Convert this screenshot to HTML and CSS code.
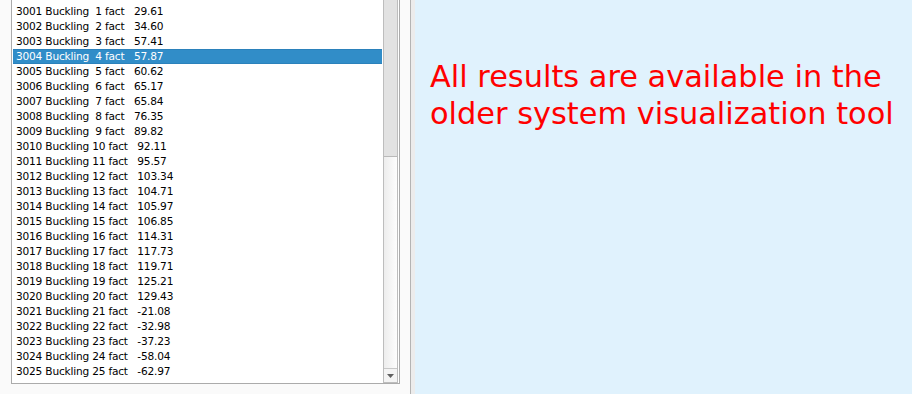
FILE: index.html
```html
<!DOCTYPE html>
<html>
  <head>
    <title>Buckling Results</title>
    <link rel="stylesheet" href="styles.css">
  </head>
  <body>
    <div class="left-panel">
      <div class="listbox">
        <div class="list-rows">
          <div class="row"> </div>
          <div class="row">3001 Buckling  1 fact   29.61</div>
          <div class="row">3002 Buckling  2 fact   34.60</div>
          <div class="row">3003 Buckling  3 fact   57.41</div>
          <div class="row selected">3004 Buckling  4 fact   57.87</div>
          <div class="row">3005 Buckling  5 fact   60.62</div>
          <div class="row">3006 Buckling  6 fact   65.17</div>
          <div class="row">3007 Buckling  7 fact   65.84</div>
          <div class="row">3008 Buckling  8 fact   76.35</div>
          <div class="row">3009 Buckling  9 fact   89.82</div>
          <div class="row">3010 Buckling 10 fact   92.11</div>
          <div class="row">3011 Buckling 11 fact   95.57</div>
          <div class="row">3012 Buckling 12 fact   103.34</div>
          <div class="row">3013 Buckling 13 fact   104.71</div>
          <div class="row">3014 Buckling 14 fact   105.97</div>
          <div class="row">3015 Buckling 15 fact   106.85</div>
          <div class="row">3016 Buckling 16 fact   114.31</div>
          <div class="row">3017 Buckling 17 fact   117.73</div>
          <div class="row">3018 Buckling 18 fact   119.71</div>
          <div class="row">3019 Buckling 19 fact   125.21</div>
          <div class="row">3020 Buckling 20 fact   129.43</div>
          <div class="row">3021 Buckling 21 fact   -21.08</div>
          <div class="row">3022 Buckling 22 fact   -32.98</div>
          <div class="row">3023 Buckling 23 fact   -37.23</div>
          <div class="row">3024 Buckling 24 fact   -58.04</div>
          <div class="row">3025 Buckling 25 fact   -62.97</div>
        </div>
        <div class="scrollbar">
          <div class="scroll-thumb"></div>
          <div class="scroll-track"></div>
          <div class="scroll-down">
            <svg width="7" height="4" viewBox="0 0 7 4">
              <polygon points="0,0 7,0 3.5,4" fill="#606060" />
            </svg>
          </div>
        </div>
      </div>
    </div>
    <div class="splitter"></div>
    <div class="right-panel">
      <p class="notice">All results are available in the older system visualization tool</p>
    </div>
  </body>
</html>
```
FILE: styles.css
```css
html,
body {
  margin: 0;
  padding: 0;
}
body {
  display: flex;
  width: 912px;
  height: 394px;
  overflow: hidden;
  font-family: "DejaVu Sans", Verdana, sans-serif;
}
.left-panel {
  width: 410px;
  flex-shrink: 0;
  background: #fafafa;
  border-right: 1px solid #b4b4b4;
  overflow: hidden;
}
.listbox {
  display: flex;
  box-sizing: border-box;
  width: 389px;
  height: 397px;
  margin: -13px 0 0 11px;
  padding: 1px 1px 0 1px;
  background: #fff;
  border: 1px solid #ababab;
}
.list-rows {
  flex: 1;
  overflow: hidden;
}
.row {
  height: 15px;
  line-height: 15px;
  padding-left: 3px;
  margin-right: 1px;
  font-size: 10.6px;
  letter-spacing: -0.2px;
  color: #000;
  white-space: pre;
}
.row.selected {
  background: #318dc8;
  color: #fff;
  box-shadow: inset 0 1px 0 #2b81bb, inset 0 -1px 0 #2b81bb;
}
.scrollbar {
  display: flex;
  flex-direction: column;
  box-sizing: border-box;
  width: 15px;
  flex-shrink: 0;
  border-left: 1px solid #bdbdbd;
  border-right: 1px solid #bdbdbd;
  border-bottom: 1px solid #bdbdbd;
}
.scroll-thumb {
  height: 167px;
  background: #e2e2e2;
  border-bottom: 1px solid #b9b9b9;
}
.scroll-track {
  flex: 1;
  background: linear-gradient(to right, #ededed, #fdfdfd);
}
.scroll-down {
  display: flex;
  align-items: center;
  justify-content: center;
  height: 13px;
  border-top: 1px solid #c8c8c8;
  background: #f4f4f4;
}
.splitter {
  width: 4px;
  flex-shrink: 0;
  background: #ececec;
}
.right-panel {
  flex: 1;
  background: #e0f2fd;
  padding: 0 0 0 15px;
}
.notice {
  margin: 0;
  padding-top: 58px;
  width: 475px;
  font-size: 30.4px;
  line-height: 37px;
  color: #ff0000;
}
```
